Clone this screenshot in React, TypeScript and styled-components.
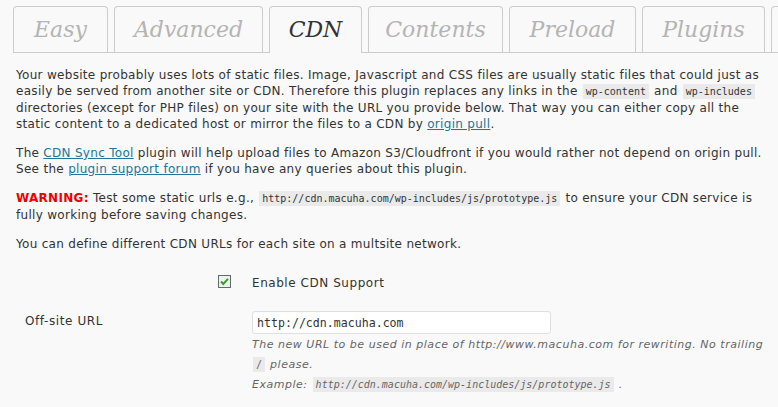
import React from 'react';
import styled, { createGlobalStyle } from 'styled-components';

const GlobalStyle = createGlobalStyle`
  html, body {
    margin: 0;
    padding: 0;
    background: #f9f9f9;
  }
  body {
    font-family: "DejaVu Sans", Verdana, sans-serif;
    color: #333;
  }
`;

const Page = styled.div`
  width: 778px;
  overflow: hidden;
`;

const TabBar = styled.nav`
  display: flex;
  align-items: flex-end;
  flex-wrap: nowrap;
  gap: 6px;
  margin: 6px 0 0 13px;
  height: 46px;
  border-bottom: 1px solid #ccc;
`;

const Tab = styled.a<{ $w: number; $active?: boolean }>`
  flex: 0 0 auto;
  box-sizing: border-box;
  width: ${({ $w }) => $w}px;
  height: ${({ $active }) => ($active ? 47 : 46)}px;
  margin-bottom: ${({ $active }) => ($active ? -1 : 0)}px;
  position: relative;
  border: 1px solid #ccc;
  border-bottom: none;
  border-radius: 4px 4px 0 0;
  background: #f9f9f9;
  text-align: center;
  font-family: "DejaVu Serif", Georgia, serif;
  font-style: italic;
  font-size: 22px;
  line-height: 46px;
  color: ${({ $active }) => ($active ? '#333' : '#b4b4b4')};
  text-decoration: none;
  white-space: nowrap;
  overflow: hidden;
`;

const Content = styled.div`
  padding: 1px 2px 0 16px;
`;

const Para = styled.p`
  margin: 13px 0;
  font-size: 12px;
  letter-spacing: 0.3px;
  line-height: 16px;
`;

const Code = styled.code<{ $italic?: boolean }>`
  font-family: "DejaVu Sans Mono", Consolas, monospace;
  font-size: 10px;
  letter-spacing: 0;
  font-style: ${({ $italic }) => ($italic ? 'italic' : 'normal')};
  background: #eaeaea;
  padding: 2px 3px;
  margin: 0 1px;
`;

const Link = styled.a`
  color: #21759b;
  text-decoration: underline;
`;

const Warning = styled.strong`
  color: #e00;
  letter-spacing: 0.3px;
`;

const Form = styled.div`
  display: flex;
  flex-direction: column;
`;

const Row = styled.div`
  display: grid;
  grid-template-columns: 236px 1fr;
  padding: 8px 0;
`;

const Label = styled.div<{ $right?: boolean }>`
  display: flex;
  justify-content: ${({ $right }) => ($right ? 'flex-end' : 'flex-start')};
  padding: ${({ $right }) => ($right ? '2px 21px 0 0' : '4px 0 0 9px')};
  font-size: 12px;
  letter-spacing: 0.6px;
  line-height: 16px;
`;

const Field = styled.div`
  display: flex;
  flex-direction: column;
  align-items: flex-start;
  font-size: 12px;
  letter-spacing: 0.55px;
  line-height: 20px;
`;

const TextInput = styled.input`
  box-sizing: border-box;
  width: 299px;
  height: 23px;
  margin-top: 2px;
  padding: 0 4px;
  border: 1px solid #dfdfdf;
  border-radius: 3px;
  background: #fff;
  font-family: "DejaVu Sans Mono", Consolas, monospace;
  font-size: 11.6px;
  letter-spacing: 0;
  color: #333;
  outline: none;
`;

const Description = styled.p`
  margin: 1px 0 0;
  padding-right: 6px;
  font-size: 11px;
  letter-spacing: 0.52px;
  line-height: 20px;
  font-style: italic;
  color: #666;
`;

const CheckBox = () => (
  <svg width="13" height="13" viewBox="0 0 13 13">
    <rect x="0.5" y="0.5" width="12" height="12" fill="#eef2ec" stroke="#5d6d6a" />
    <path d="M3 6.5 L5.3 9 L10 3.8" fill="none" stroke="#3c9b2b" strokeWidth="2" />
  </svg>
);

const tabs = [
  { name: 'Easy', w: 95 },
  { name: 'Advanced', w: 149 },
  { name: 'CDN', w: 93, active: true },
  { name: 'Contents', w: 135 },
  { name: 'Preload', w: 127 },
  { name: 'Plugins', w: 123 },
  { name: 'Debug', w: 110 },
];

export default function App() {
  return (
    <Page>
      <GlobalStyle />
      <TabBar>
        {tabs.map((t) => (
          <Tab key={t.name} $w={t.w} $active={t.active}>
            {t.name}
          </Tab>
        ))}
      </TabBar>
      <Content>
        <Para>
          Your website probably uses lots of static files. Image, Javascript and CSS files are usually
          static files that could just as easily be served from another site or CDN. Therefore this
          plugin replaces any links in the <Code>wp-content</Code> and <Code>wp-includes</Code>{' '}
          directories (except for PHP files) on your site with the URL you provide below. That way you
          can either copy all the static content to a dedicated host or mirror the files to a CDN by{' '}
          <Link href="#">origin pull</Link>.
        </Para>
        <Para>
          The <Link href="#">CDN Sync Tool</Link> plugin will help upload files to Amazon S3/Cloudfront
          if you would rather not depend on origin pull. See the{' '}
          <Link href="#">plugin support forum</Link> if you have any queries about this plugin.
        </Para>
        <Para>
          <Warning>WARNING:</Warning> Test some static urls e.g.,{' '}
          <Code>http://cdn.macuha.com/wp-includes/js/prototype.js</Code> to ensure your CDN service is
          fully working before saving changes.
        </Para>
        <Para>You can define different CDN URLs for each site on a multsite network.</Para>
        <Form>
          <Row>
            <Label $right>
              <CheckBox />
            </Label>
            <Field>Enable CDN Support</Field>
          </Row>
          <Row>
            <Label>Off-site URL</Label>
            <Field>
              <TextInput defaultValue="http://cdn.macuha.com" />
              <Description>
                The new URL to be used in place of http://www.macuha.com for rewriting. No trailing{' '}
                <Code>/</Code> please.
                <br />
                Example: <Code $italic>http://cdn.macuha.com/wp-includes/js/prototype.js</Code> .
              </Description>
            </Field>
          </Row>
        </Form>
      </Content>
    </Page>
  );
}
